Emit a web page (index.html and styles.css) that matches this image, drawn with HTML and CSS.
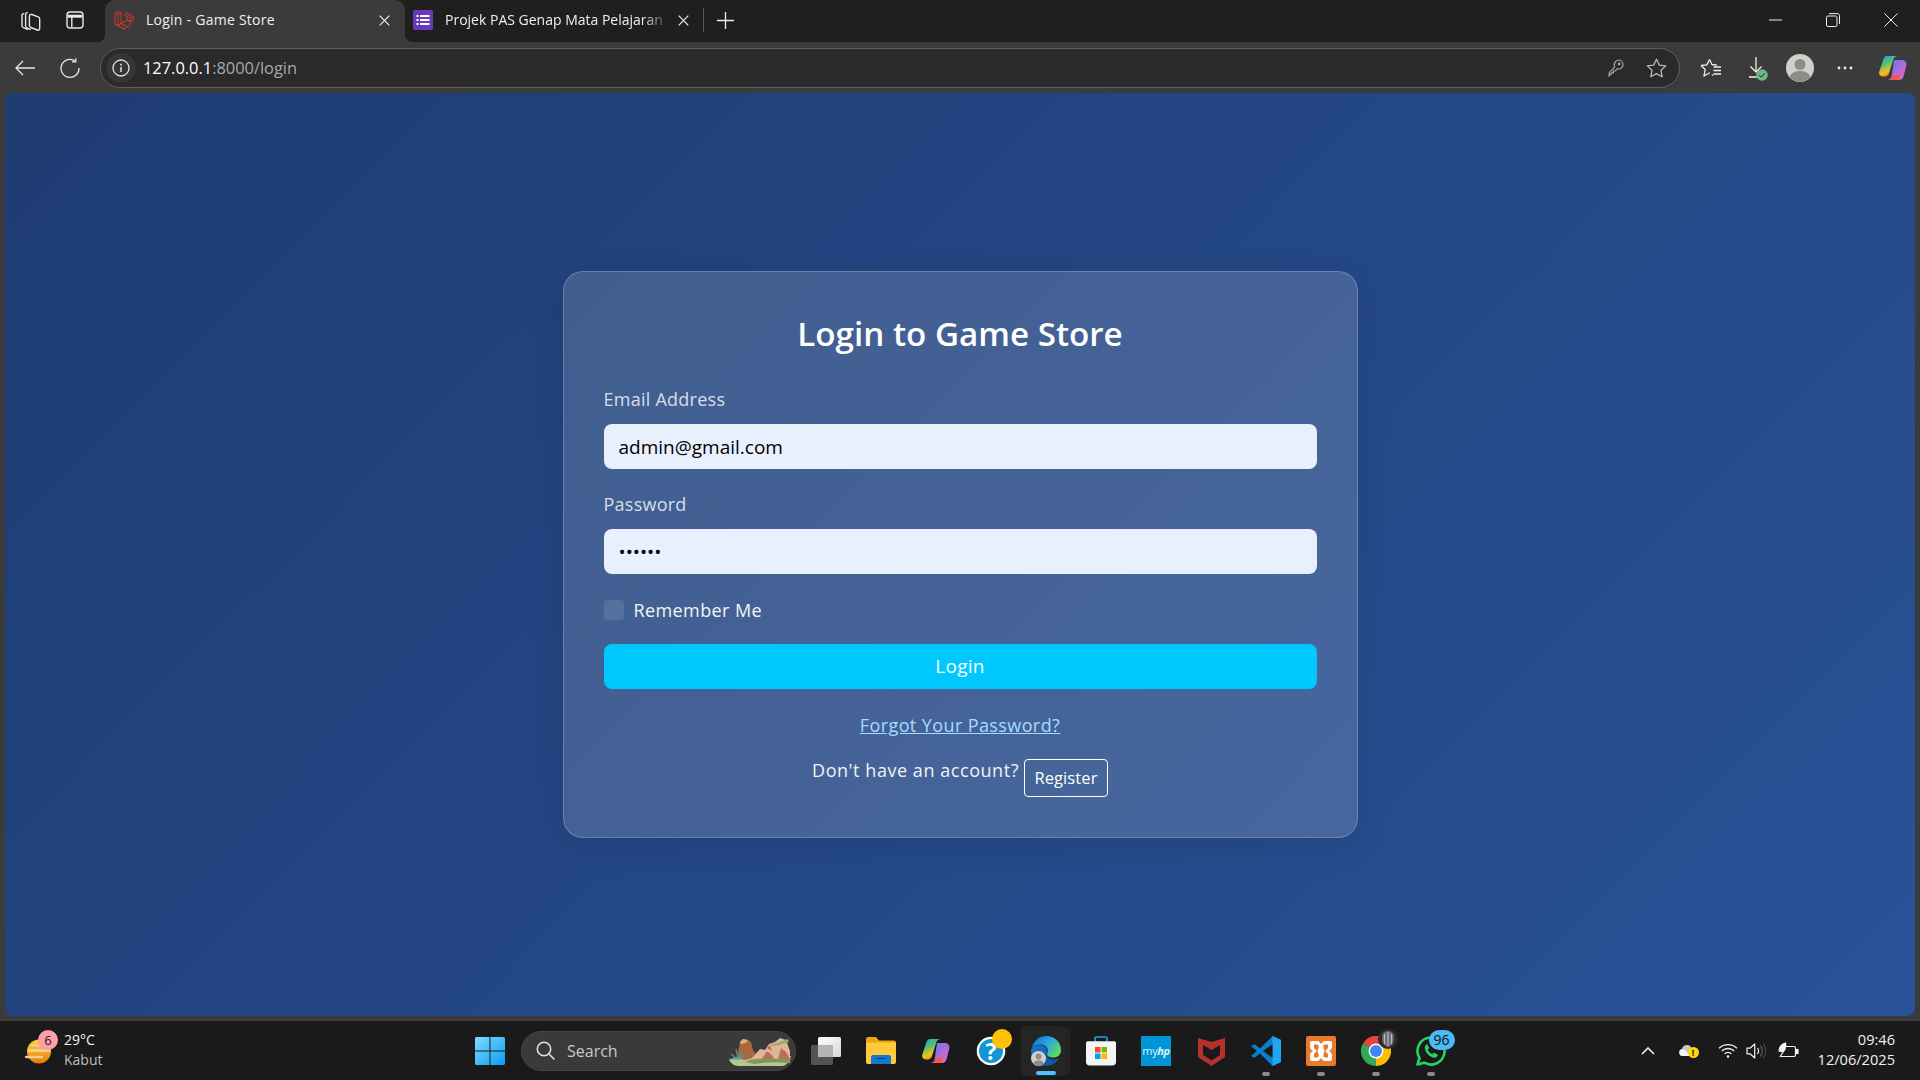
FILE: index.html
```html
<!DOCTYPE html>
<html lang="en">
<head>
<meta charset="utf-8">
<title>Login - Game Store</title>
<link rel="stylesheet" href="styles.css">
</head>
<body>
<header class="tabbar">
  <div class="tab-tools">
    <svg class="tool-a" width="22" height="22" viewBox="0 0 22 22" fill="none" stroke="#e4e4e4" stroke-width="1.4" stroke-linejoin="round"><path d="M8 20.5 3.3 18.6c-.9-.4-1.3-1-1.3-2V6.5c0-1.6 1-2.2 2.3-1.7"/><path d="M10.8 20.7 6.8 18.8c-.8-.4-1.2-1-1.2-2V5.6c0-1.5.8-2.3 2.2-1.7"/><path d="M9.4 7.3c0-1.6 1-2.3 2.4-1.8l6.4 2.4c1 .4 1.5 1.1 1.5 2.2v9.2c0 1.5-1 2.3-2.4 1.7l-6.4-2.5c-1-.4-1.5-1-1.5-2z"/></svg>
    <svg class="tool-b" width="18" height="18" viewBox="0 0 18 18" fill="none" stroke="#e8e8e8" stroke-width="1.4"><rect x="1" y="1" width="16" height="16" rx="3"/><path d="M1.6 5.2h14.8" stroke-width="3" /><path d="M5.8 6v10.5"/></svg>
  </div>
  <div class="tab tab-active">
    <svg class="tab-icon" width="21" height="20" viewBox="0 0 21 20" fill="none" stroke="#c0392b" stroke-width="1.1" stroke-linejoin="round"><path d="M1 3.2 4 1.4l3 1.8v10.3l6.2-3.6V6.4l3-1.8 3 1.8v3.6l-3 1.8v3.4l-6.2 3.6L1 14.6z"/><path d="M1 3.2l3 1.8 3-1.8M4 5v10.7l7 3.7M7 13.5l-3 2.2M13.2 6.4l3 1.8 3-1.8M16.2 8.2v3.6M13.2 9.9l3 1.9M7 13.5l6.2 3.6"/><path d="M13.2 6.4 10.2 4.6l3-1.8 3 1.8"/></svg>
    <span class="tab-title">Login - Game Store</span>
    <svg class="tab-close" width="11" height="11" viewBox="0 0 11 11" stroke="#eee" stroke-width="1.2"><path d="M.7.7l9.6 9.6M10.3.7.7 10.3"/></svg>
  </div>
  <div class="tab tab-idle">
    <svg class="tab-icon-forms" width="20" height="20" viewBox="0 0 20 20"><rect width="20" height="20" rx="1.5" fill="#673ab7"/><path d="M3.5 5h2v2h-2zM3.5 9h2v2h-2zM3.5 13h2v2h-2zM7 5h9.5v2H7zM7 9h9.5v2H7zM7 13h9.5v2H7z" fill="#fff"/></svg>
    <span class="tab-title tab-fade">Projek PAS Genap Mata Pelajaran</span>
    <svg class="tab-close" width="11" height="11" viewBox="0 0 11 11" stroke="#eee" stroke-width="1.2"><path d="M.7.7l9.6 9.6M10.3.7.7 10.3"/></svg>
  </div>
  <span class="tab-divider"></span>
  <svg class="tab-plus" width="17" height="17" viewBox="0 0 17 17" stroke="#eee" stroke-width="1.3"><path d="M8.5 0v17M0 8.5h17"/></svg>
  <div class="win-controls">
    <svg width="13" height="2" viewBox="0 0 13 2" stroke="#eee" stroke-width="1"><path d="M0 1h13"/></svg>
    <svg width="14" height="14" viewBox="0 0 14 14" fill="none" stroke="#eee" stroke-width="1"><rect x=".5" y="3" width="10.5" height="10.5" rx="1.5"/><path d="M3 .6h8.5c1.1 0 2 .9 2 2V11"/></svg>
    <svg width="14" height="14" viewBox="0 0 14 14" stroke="#eee" stroke-width="1"><path d="M.5.5l13 13M13.500.5l-13 13"/></svg>
  </div>
</header>

<nav class="toolbar">
  <svg class="nav-back" width="20" height="16" viewBox="0 0 20 16" fill="none" stroke="#e8e8e8" stroke-width="1.3"><path d="M20 8H1M8 1 1 8l7 7"/></svg>
  <svg class="nav-reload" width="20" height="20" viewBox="0 0 20 20" fill="none" stroke="#e8e8e8" stroke-width="1.3"><path d="M15.500 3.200A9 9 0 1 0 19 10"/><path d="M15.800 .2v3.600h-3.800"/></svg>
  <div class="address">
    <span class="info-chip">
      <svg width="18" height="18" viewBox="0 0 18 18" fill="none" stroke="#e0e0e0" stroke-width="1.3"><circle cx="9" cy="9" r="8"/><path d="M9 8v5" stroke-width="1.5"/><path d="M9 4.800v1.600" stroke-width="1.7"/></svg>
    </span>
    <span class="url"><span class="url-host">127.0.0.1</span>:8000/login</span>
    <svg class="addr-key" width="16" height="18" viewBox="0 0 16 18" fill="none" stroke="#a8a8a8" stroke-width="1.2"><path d="M10.500 1a4.500 4.500 0 0 1 4.500 4.500c0 3-2.800 5.200-5.700 4.300L7.200 12H5.400v1.800H3.700L2.600 15.500 1 16.800l.2-2.900 5.400-5.800C5.500 5 7.500 1 10.500 1z"/><circle cx="11.200" cy="4.800" r=".9"/></svg>
    <svg class="addr-star" width="21" height="20" viewBox="0 0 21 20" fill="none" stroke="#b8b8b8" stroke-width="1.3" stroke-linejoin="round"><path d="M10.500 1.200l2.800 5.900 6.400.8-4.700 4.400 1.200 6.400-5.700-3.100-5.700 3.100 1.200-6.400L1.300 7.900l6.400-.8z"/></svg>
  </div>
  <div class="nav-right">
    <svg class="nr-fav" width="22" height="20" viewBox="0 0 22 20" fill="none" stroke="#f0f0f0" stroke-width="1.3" stroke-linejoin="round"><path d="M9.500 1.500l2.500 5 5 .7M12 16.500l1 .9M1 7.500l5.800-.6 2.700-5.400M1 7.500l4.200 4L4 18l5.800-3.300"/><path d="M13.500 9h7.500M13.500 12.500h7.500M13.500 16h7.500"/></svg>
    <span class="nr-dl">
      <svg width="14" height="21" viewBox="0 0 14 21" fill="none" stroke="#f0f0f0" stroke-width="1.300"><path d="M7 0v15M1.500 9.500 7 15l5.500-5.500M0 20h10"/></svg>
      <svg class="dl-check" width="12" height="12" viewBox="0 0 12 12"><circle cx="6" cy="6" r="5.800" fill="#6dbb84"/><path d="M3.200 6.200l2 1.900 3.500-3.800" fill="none" stroke="#222" stroke-width="1"/></svg>
    </span>
    <svg class="nr-avatar" width="28" height="28" viewBox="0 0 28 28"><circle cx="14" cy="14" r="14" fill="#d2d0cb"/><circle cx="14" cy="10.500" r="5.500" fill="#8f8d89"/><path d="M3.500 23c2-4.500 6-6 10.500-6s8.500 1.500 10.500 6a14 14 0 0 1-21 0z" fill="#8f8d89"/></svg>
    <svg class="nr-dots" width="16" height="4" viewBox="0 0 16 4" fill="#eee"><circle cx="2" cy="2" r="1.400"/><circle cx="8" cy="2" r="1.400"/><circle cx="14" cy="2" r="1.400"/></svg>
    <svg class="nr-copilot" width="28" height="26" viewBox="0 0 28 26"><defs><linearGradient id="cpa" x1="0" y1="0" x2=".4" y2="1"><stop offset="0" stop-color="#1c9fe8"/><stop offset=".45" stop-color="#58c26c"/><stop offset=".8" stop-color="#f6c21c"/><stop offset="1" stop-color="#f28b1d"/></linearGradient><linearGradient id="cpb" x1="0" y1="0" x2="1" y2="1"><stop offset="0" stop-color="#4a7fe8"/><stop offset=".5" stop-color="#a86be0"/><stop offset="1" stop-color="#e86fb0"/></linearGradient></defs><path d="M15 5h8c3 0 5 2.500 4.300 5.500l-2.500 10c-.7 3-2.500 4.500-5 4.500H9c2-.3 3-1.500 3.600-3.500z" fill="url(#cpb)"/><path d="M8 1h11c-2.500 0-4 1.500-4.700 3.500L10 18c-.6 2-2 3.500-4 3.500H3.500C1 21.500-.5 19 .3 16.500L4.500 4C5.200 2 6.500 1 8 1z" fill="url(#cpa)"/><path d="M9 25h8c2 0 3-1 3.500-2.500l1-4c-2 1.500-5 2-8 1.500l-1 2.500c-.5 1.500-1.500 2.300-3.500 2.500z" fill="#f2574a"/></svg>
  </div>
</nav>

<main class="viewport">
  <section class="card">
    <h1 class="card-title">Login to Game Store</h1>
    <form class="login-form">
      <div class="field">
        <label class="field-label" for="email">Email Address</label>
        <input class="field-input" id="email" type="text" value="admin@gmail.com">
      </div>
      <div class="field">
        <label class="field-label" for="pass">Password</label>
        <input class="field-input" id="pass" type="password" value="secret">
      </div>
      <label class="remember"><span class="check"></span><span>Remember Me</span></label>
      <button class="login-btn" type="button">Login</button>
      <a class="forgot" href="#">Forgot Your Password?</a>
      <div class="register-row">
        <span class="register-text">Don't have an account?</span>
        <a class="register-btn" href="#">Register</a>
      </div>
    </form>
  </section>
</main>

<footer class="taskbar">
  <div class="weather">
    <span class="weather-icon">
      <svg width="26" height="30" viewBox="0 0 26 30"><defs><linearGradient id="sun" x1="0" y1="0" x2="0" y2="1"><stop offset="0" stop-color="#ffd23a"/><stop offset="1" stop-color="#ea7a0c"/></linearGradient></defs><circle cx="14" cy="15.500" r="12" fill="url(#sun)"/><path d="M4 14.500h20" stroke="#f0d08a" stroke-width="3" stroke-linecap="round"/><path d="M1 21h16M7 9.500h14" stroke="#eccd92" stroke-width="2.500" stroke-linecap="round"/></svg>
      <span class="weather-badge">6</span>
    </span>
    <div class="weather-text">
      <span class="temp">29°C</span>
      <span class="cond">Kabut</span>
    </div>
  </div>
  <div class="task-cluster">
    <span class="slot slot-win">
      <svg width="30" height="30" viewBox="0 0 30 30"><defs><linearGradient id="win" x1="0" y1="0" x2="1" y2="1"><stop offset="0" stop-color="#7fdcff"/><stop offset="1" stop-color="#0a9bf5"/></linearGradient></defs><path fill="url(#win)" d="M1 1h13.500v13.500H0V2zM15.500 1H29l1 1v12.500H15.500zM0 15.500h14.500V29H1l-1-1zM15.500 15.500H30V28l-1 1H15.500z"/></svg>
    </span>
    <div class="search">
      <svg width="19" height="19" viewBox="0 0 19 19" fill="none" stroke="#e0e0e0" stroke-width="1.600"><circle cx="8" cy="8" r="6.700"/><path d="M13 13l5 5" stroke-linecap="round"/></svg>
      <span class="search-text">Search</span>
      <svg class="search-art" width="62" height="32" viewBox="0 0 62 32"><path d="M0 25c8-5 20-3 30-3s20-2 32-1c-1 5-4 9-8 10H10C5 31 2 28 0 25z" fill="#b9c68d"/><path d="M8 22 11 7l3-3 5 1 3 2 2 8 5 7-14 3z" fill="#a8673f"/><path d="M11 7l3-3 5 1-2 3-5 1z" fill="#dcb083"/><path d="M22 24l9-10 5 1 4-6 6-2 5-4 6 2 4 11v12L42 26z" fill="#e3b496"/><path d="M33 24l5-8 5 4 3 6zM49 24l3-11 5 4 4 7zM38 13l3-3 2 6z" fill="#b9705a"/><path d="M42 9c4 1 10-3 17-5l1 3c-6 1-11 4-17 4z" fill="#93ad6b"/><path d="M16 27c10-5 24-3 46-3l-2 4c-14-1-25-1-34 1z" fill="#7f975a"/><path d="M2 19l6 5M7 14l2 10M13 16l-3 8M16 19l-5 5M0 24h10" stroke="#3ea39a" stroke-width="1.200"/></svg>
    </div>
    <span class="slot slot-first">
      <svg width="30" height="28" viewBox="0 0 30 28"><defs><linearGradient id="tv" x1="0" y1="0" x2="1" y2="1"><stop offset="0" stop-color="#fff"/><stop offset="1" stop-color="#d5d5d5"/></linearGradient></defs><rect x="7" y="0" width="23" height="20" rx="1.500" fill="url(#tv)"/><rect x="0" y="8" width="22" height="20" rx="1.500" fill="#5b5b5b" fill-opacity=".9"/><rect x="7" y="8" width="15" height="12" fill="#b4b4b4"/></svg>
    </span>
    <span class="slot">
      <svg width="30" height="27" viewBox="0 0 30 27"><path d="M0 2c0-1 1-2 2-2h8l3 3.500h15c1 0 2 .8 2 2V8H0z" fill="#e8a70c"/><path d="M0 5.500h30V25c0 1-1 2-2 2H2c-1 0-2-1-2-2z" fill="#ffcb3d"/><path d="M5 20c0-1 1-2 2-2h16c1 0 2 1 2 2v7H5z" fill="#0d79d1"/><path d="M10 21.500h10" stroke="#08406e" stroke-width="1"/></svg>
    </span>
    <span class="slot">
      <svg width="28" height="26" viewBox="0 0 28 26"><path d="M15 5h8c3 0 5 2.500 4.300 5.500l-2.500 10c-.7 3-2.500 4.500-5 4.500H9c2-.3 3-1.500 3.600-3.500z" fill="url(#cpb)"/><path d="M8 1h11c-2.500 0-4 1.500-4.700 3.500L10 18c-.6 2-2 3.500-4 3.500H3.500C1 21.500-.5 19 .3 16.500L4.500 4C5.200 2 6.500 1 8 1z" fill="url(#cpa)"/><path d="M9 25h8c2 0 3-1 3.500-2.500l1-4c-2 1.500-5 2-8 1.500l-1 2.500c-.5 1.500-1.500 2.300-3.500 2.500z" fill="#f2574a"/></svg>
    </span>
    <span class="slot">
      <svg width="30" height="30" viewBox="0 0 30 30"><circle cx="15" cy="15" r="14.300" fill="#fff"/><circle cx="15" cy="15" r="12" fill="#1296d4"/><text class="help-mark" x="15" y="24" text-anchor="middle">?</text></svg>
      <span class="help-dot"></span>
    </span>
    <span class="slot slot-active">
      <svg width="30" height="30" viewBox="0 0 30 30"><defs><linearGradient id="ed1" x1="0" y1="0" x2="1" y2=".6"><stop offset="0" stop-color="#0c6cc4"/><stop offset=".55" stop-color="#2aa6df"/><stop offset="1" stop-color="#5fd568"/></linearGradient><linearGradient id="ed2" x1="0" y1="0" x2="1" y2="1"><stop offset="0" stop-color="#1479ca"/><stop offset="1" stop-color="#0b4d9d"/></linearGradient></defs><path d="M1 12C2.500 4.500 8 0 15.500 0 24 0 30 6.500 30 14c0 5-3.500 7.500-8 7.500-3 0-6-1-6-3.500 0-1 .8-1.500 1-3 0-3.500-3-6.500-7-6.500-4 0-7.500 1.500-9 3.500z" fill="url(#ed1)"/><path d="M1 12c2-2 5-3 8.500-3 4 0 7 3 7 6.500-.5 1.500-1 2-1 3 0 3 3 5 7 5 2.500 0 5-.5 6-2-2.500 5-7.500 8.500-13.500 8.500C6.500 30 0 23 0 15c0-1 .5-2 1-3z" fill="url(#ed2)"/></svg>
      <svg class="edge-avatar" width="15" height="15" viewBox="0 0 15 15"><circle cx="7.500" cy="7.500" r="7.500" fill="#d2d0cb"/><circle cx="7.500" cy="5.500" r="3" fill="#8f8d89"/><path d="M2 12.500c1-2.500 3-3.300 5.500-3.300s4.500 .8 5.500 3.300a7.500 7.500 0 0 1-11 0z" fill="#8f8d89"/></svg>
    </span>
    <span class="slot">
      <svg width="30" height="30" viewBox="0 0 30 30"><path d="M9 6V2.500C9 1.500 9.500 1 10.500 1h9c1 0 1.500 .5 1.500 1.500V6" fill="none" stroke="#1fa5e0" stroke-width="1.600"/><path d="M0 7c0-1 .8-1.800 1.800-1.800h26.400c1 0 1.800 .8 1.800 1.800v19c0 2-1.500 3.500-3.500 3.500h-23C1.500 29.500 0 28 0 26z" fill="#f4f4f4"/><rect x="9" y="11" width="5.500" height="5.500" fill="#f25022"/><rect x="15.500" y="11" width="5.500" height="5.500" fill="#7fba00"/><rect x="9" y="17.500" width="5.500" height="5.500" fill="#00a4ef"/><rect x="15.500" y="17.500" width="5.500" height="5.500" fill="#ffb900"/></svg>
    </span>
    <span class="slot">
      <span class="myhp">my<i>hp</i></span>
    </span>
    <span class="slot">
      <svg width="27" height="30" viewBox="0 0 27 30"><path d="M0 2l13.500 4L27 2v19l-13.500 9L0 21z" fill="#b8302a"/><path d="M5 9l8.500 5L22 9v10l-8.500 5.500L5 19z" fill="#1a1a1a"/></svg>
    </span>
    <span class="slot">
      <svg width="30" height="30" viewBox="0 0 30 30"><path d="M21.500 0 30 4v22l-8.500 4L9 17.500l-5.500 4.300L0 20l6-5-6-5 3.500-1.800L9 12.500z" fill="#0a7fcb"/><path d="M21.500 0 30 4v22l-8.500 4z" fill="#22a5ee"/><path d="M21.500 8.200 12 15l9.500 6.800z" fill="#1a1a1a"/></svg>
    </span>
    <span class="slot">
      <svg width="30" height="30" viewBox="0 0 30 30"><rect width="30" height="30" rx="2" fill="#ea7a2a"/><path d="M6 5h5c2 0 3 1.500 4 3 1-1.500 2-3 4-3h5c1.500 0 2 1 2 2.500V11c0 1.500-1.500 3-3 4 1.500 1 3 2.500 3 4v3.500c0 1.500-.5 2.500-2 2.500h-5c-2 0-3-1.500-4-3-1 1.500-2 3-4 3H6c-1.500 0-2-1-2-2.500V19c0-1.500 1.500-3 3-4-1.500-1-3-2.500-3-4V7.500C4 6 4.500 5 6 5z" fill="#fff"/><path d="M8 8.500h3c1.500 0 2 1.500 1.500 3.500l-1 3 1 3c.5 2 0 3.500-1.500 3.500H8v-3.500c1-1.500 2.500-2 2.500-3s-1.500-1.500-2.500-3zM22 8.500h-3c-1.500 0-2 1.500-1.500 3.500l1 3-1 3c-.5 2 0 3.500 1.500 3.500h3v-3.500c-1-1.500-2.500-2-2.500-3s1.500-1.500 2.500-3z" fill="#ea7a2a"/></svg>
    </span>
    <span class="slot">
      <svg width="30" height="30" viewBox="0 0 30 30"><path d="M15 15 2 7.500A15 15 0 0 1 28 7.500z" fill="#e8453c"/><path d="M15 15 28 7.500A15 15 0 0 1 15 30z" fill="#fbbc05"/><path d="M15 15 15 30A15 15 0 0 1 2 7.500z" fill="#34a853"/><circle cx="15" cy="15" r="7.500" fill="#fff"/><circle cx="15" cy="15" r="6" fill="#4285f4"/></svg>
      <svg class="chrome-badge" width="20" height="20" viewBox="0 0 20 20"><circle cx="10" cy="10" r="10" fill="#2c2c2e"/><path d="M10 2c-4 0-6 3-6 7s1.500 8 6 9c4.500-1 6-5 6-9s-2-7-6-7z" fill="#6c6c70"/><path d="M10 3v14M6.500 5v10M13.500 5v10" stroke="#b8b8bc" stroke-width="1.200"/></svg>
    </span>
    <span class="slot">
      <svg width="30" height="30" viewBox="0 0 30 30" fill="none"><path d="M15 1.500A13.500 13.500 0 0 0 3.500 22L1.500 28.500 8.300 26.700A13.500 13.500 0 1 0 15 1.500z" stroke="#25d366" stroke-width="2.600" stroke-linejoin="round"/><path d="M10.500 8.500c-1.500 1-2 2.500-1.500 4.500 1 4 4.500 7.500 8 8.500 2 .5 3.500 0 4.500-1.500.5-1 .3-1.500-.3-1.800l-2.700-1.300c-.6-.3-1-.1-1.300.3l-.8 1c-2-.8-3.700-2.500-4.600-4.500l.8-.9c.4-.4.5-.8.3-1.300l-1.100-2.600c-.3-.7-1-.8-1.800-.4z" fill="#25d366"/></svg>
      <span class="wa-badge">96</span>
    </span>
  </div>
  <div class="tray">
    <svg class="tray-chev" width="14" height="8" viewBox="0 0 14 8" fill="none" stroke="#f0f0f0" stroke-width="1.600"><path d="M1 7l6-6 6 6"/></svg>
    <span class="tray-cloud">
      <svg width="16" height="11" viewBox="0 0 16 11"><path d="M3.500 11A3.500 3.500 0 0 1 3 4.100 5 5 0 0 1 12.500 3 4 4 0 0 1 12 11z" fill="#c8c8c8"/><path d="M3.500 11A3.500 3.500 0 0 1 3 4.100c2 0 4 2 5 3.500 1 1.500 2 3.400 2 3.400z" fill="#f4f4f4"/></svg>
      <span class="cloud-warn">!</span>
    </span>
    <svg class="tray-wifi" width="20" height="15" viewBox="0 0 20 15" fill="none" stroke="#f4f4f4" stroke-width="1.300"><path d="M1 5.200a13 13 0 0 1 18 0M3.800 8a9 9 0 0 1 12.400 0M6.600 10.800a5 5 0 0 1 6.800 0"/><circle cx="10" cy="13.500" r="1.200" fill="#f4f4f4" stroke="none"/></svg>
    <svg class="tray-vol" width="20" height="18" viewBox="0 0 20 18" fill="none" stroke="#f4f4f4" stroke-width="1.200"><path d="M1 6.200h3L8.700 2v14L4 11.800H1z" stroke-linejoin="round"/><path d="M11.500 6c1.300 1.800 1.300 4.200 0 6"/><path d="M14.500 3.500c2.200 3.200 2.200 7.800 0 11" stroke="#6a6a6a"/><path d="M17.300 1.500c3 4.500 3 10.500 0 15" stroke="#4a4a4a"/></svg>
    <svg class="tray-batt" width="21" height="17" viewBox="0 0 21 17" fill="none" stroke="#f4f4f4" stroke-width="1.200"><path d="M7 4.500h9c.8 0 1.500 .7 1.500 1.500v7c0 .8-.7 1.500-1.500 1.500H3"/><path d="M18 7.500h2v4h-2" fill="#f4f4f4"/><path d="M1 9.500C1 5 4 2 7.500 1c.8 3.500-.8 7.500-4 9" fill="#f4f4f4"/><path d="M1.800 15 7.500 6.500"/></svg>
    <div class="clock"><span>09:46</span><span>12/06/2025</span></div>
  </div>
</footer>
</body>
</html>
```

FILE: styles.css
```css
* { box-sizing: border-box; }
html, body { height: 100%; }
body {
  margin: 0;
  display: flex;
  flex-direction: column;
  height: 1080px;
  overflow: hidden;
  background: #3b3b3b;
  font-family: "Open Sans", "Noto Sans", sans-serif;
  color: #fff;
}
svg { display: block; flex: none; }

/* Tab strip */
.tabbar {
  height: 42px;
  flex: none;
  display: flex;
  align-items: center;
  padding-bottom: 2px;
  background: #1f1f1f;
}
.tab-tools { width: 105px; display: flex; align-items: center; padding-left: 20px; }
.tool-b { margin-left: 24px; }
.tab {
  display: flex;
  align-items: center;
  align-self: flex-start;
  height: 42px;
  position: relative;
}
.tab-active {
  width: 300px;
  padding: 0 15px 2px 9px;
  background: #3b3b3b;
  border-radius: 10px 10px 0 0;
}
.tab-active::before, .tab-active::after {
  content: "";
  position: absolute;
  bottom: 0;
  width: 8px;
  height: 8px;
}
.tab-active::before { left: -8px; background: radial-gradient(circle at 0 0, transparent 8px, #3b3b3b 8.5px); }
.tab-active::after { right: -8px; background: radial-gradient(circle at 100% 0, transparent 8px, #3b3b3b 8.5px); }
.tab-idle { width: 297px; padding: 0 13px 2px 8px; }
.tab-title {
  flex: 1;
  min-width: 0;
  margin-left: 11px;
  padding-bottom: 2px;
  font-size: 14px;
  letter-spacing: .25px;
  white-space: nowrap;
  color: #efefef;
}
.tab-icon-forms + .tab-title { margin-left: 12px; }
.tab-fade {
  margin-right: 14px;
  letter-spacing: 0;
  -webkit-mask-image: linear-gradient(90deg, #000 90%, rgba(0, 0, 0, .25));
  mask-image: linear-gradient(90deg, #000 90%, rgba(0, 0, 0, .25));
}
.tab-divider { width: 1px; height: 24px; background: #5a5a5a; margin-left: 1px; }
.tab-plus { margin-left: 13px; }
.win-controls {
  margin-left: auto;
  display: flex;
  align-items: center;
  gap: 44px;
  padding-right: 22px;
}

/* Toolbar */
.toolbar {
  height: 51px;
  flex: none;
  display: flex;
  align-items: center;
  background: #3b3b3b;
  padding: 0 13px 0 15px;
}
.nav-reload { margin-left: 25px; }
.address {
  margin-left: 20px;
  width: 1580px;
  height: 40px;
  display: flex;
  align-items: center;
  background: #2a2a2a;
  border: 1.5px solid #5f5f5f;
  border-radius: 20px;
  padding: 0 12px 0 5px;
}
.info-chip {
  width: 30px;
  height: 30px;
  border-radius: 50%;
  background: #363636;
  display: flex;
  align-items: center;
  justify-content: center;
}
.url { margin-left: 7px; font-size: 16.4px; color: #a8a8a8; }
.url-host { color: #fff; }
.addr-key { margin-left: auto; }
.addr-star { margin-left: 22px; }
.nav-right { display: flex; align-items: center; margin-left: 20px; }
.nr-dl { position: relative; margin-left: 27px; }
.dl-check { position: absolute; right: -5px; bottom: -3px; }
.nr-avatar { margin-left: 23px; }
.nr-dots { margin-left: 23px; }
.nr-copilot { margin-left: 26px; }

/* Page */
.viewport {
  flex: 1;
  min-height: 0;
  margin: 0 5px 5px;
  border-radius: 8px;
  background: linear-gradient(135deg, #1e3c72, #2a5298);
  display: flex;
  align-items: center;
  justify-content: center;
}
.card {
  width: 795px;
  height: 567px;
  padding: 40px;
  background: rgba(255, 255, 255, .15);
  border: 1px solid rgba(255, 255, 255, .2);
  border-radius: 20px;
  box-shadow: 0 8px 32px rgba(0, 0, 0, .1);
}
.card-title {
  margin: 0 0 32px;
  height: 44px;
  line-height: 44px;
  text-align: center;
  font-size: 33.2px;
  font-weight: 600;
}
.login-form { display: flex; flex-direction: column; }
.field { display: flex; flex-direction: column; gap: 14px; margin-bottom: 24px; }
.field-label {
  line-height: 22px;
  font-size: 18px;
  letter-spacing: .25px;
  color: rgba(255, 255, 255, .8);
}
.field-input {
  height: 45px;
  border: 0;
  border-radius: 8px;
  padding: 0 15px;
  background: #e8f0fe;
  color: #000;
  font: 19px "Open Sans", sans-serif;
  outline: 0;
}
.remember {
  display: flex;
  align-items: center;
  gap: 10px;
  height: 24px;
  font-size: 18px;
  letter-spacing: .4px;
  margin-bottom: 22px;
  color: #f4f4f4;
}
.check {
  width: 20px;
  height: 20px;
  border-radius: 4px;
  background: rgba(255, 255, 255, .1);
}
.login-btn {
  height: 45px;
  border: 0;
  border-radius: 8px;
  padding: 0 0 1px;
  background: #00c8ff;
  color: #fff;
  font: 19px "Open Sans", sans-serif;
  letter-spacing: .3px;
}
.forgot {
  margin-top: 24px;
  align-self: center;
  line-height: 24px;
  font-size: 18px;
  letter-spacing: .4px;
  color: #a8dcff;
}
.register-row {
  display: flex;
  justify-content: center;
  align-items: flex-start;
  gap: 5px;
  margin-top: 22px;
}
.register-text { line-height: 23px; font-size: 18px; letter-spacing: .55px; color: #f2f2f2; }
.register-btn {
  height: 38px;
  width: 84px;
  line-height: 36px;
  text-align: center;
  border: 1px solid #fff;
  border-radius: 4px;
  color: #fff;
  font-size: 16.5px;
  letter-spacing: .1px;
  text-decoration: none;
}

/* Taskbar */
.taskbar {
  height: 59px;
  flex: none;
  display: flex;
  align-items: center;
  background: #1a1a1a;
}
.weather { width: 462px; display: flex; align-items: center; padding-left: 25px; }
.weather-icon { position: relative; display: block; }
.weather-badge {
  position: absolute;
  left: 13px;
  top: -6px;
  width: 20px;
  height: 20px;
  border-radius: 50%;
  background: #ff9ea8;
  color: #1a1a1a;
  font-size: 13px;
  line-height: 20px;
  text-align: center;
}
.weather-text {
  margin-left: 13px;
  padding-bottom: 1px;
  display: flex;
  flex-direction: column;
  font-size: 14px;
  line-height: 20px;
}
.temp { color: #f4f4f4; }
.cond { color: #bdbdbd; }
.task-cluster { display: flex; align-items: center; }
.slot {
  position: relative;
  width: 55px;
  height: 50px;
  display: flex;
  align-items: center;
  justify-content: center;
}
.slot-win { margin-right: 4px; }
.slot-first { margin-left: 2.5px; }
.search {
  width: 275px;
  height: 40px;
  border-radius: 20px;
  background: #3a3a3a;
  border: 1px solid #454545;
  display: flex;
  align-items: center;
  padding: 0 4px 0 14px;
}
.search-text { margin-left: 12px; color: #c8c8c8; font-size: 16px; }
.search-art { margin-left: auto; }
.help-mark { font: 700 23px "Open Sans", sans-serif; fill: #fff; }
.help-dot {
  position: absolute;
  left: 28.5px;
  top: 3px;
  width: 20px;
  height: 20px;
  border-radius: 50%;
  background: #ffc107;
}
.slot-active {
  background: #252525;
  border-radius: 5px;
  box-shadow: 5px 0 0 -1px #232323;
  width: 45px;
  margin: 0 7.5px 0 2.5px;
  padding-left: 5px;
}
.slot-active::after {
  content: "";
  position: absolute;
  left: 15px;
  bottom: 1px;
  width: 20px;
  height: 4px;
  border-radius: 2px;
  background: #4cc2ff;
}
.edge-avatar { position: absolute; left: 9.5px; top: 25px; }
.myhp {
  width: 30px;
  height: 30px;
  background: #0096d6;
  color: #dff3fb;
  font-size: 11px;
  line-height: 30px;
  text-align: center;
  letter-spacing: -.4px;
}
.myhp i { font-weight: 700; }
.slot:nth-last-child(-n+4)::after {
  content: "";
  position: absolute;
  left: 23.5px;
  bottom: 0;
  width: 8px;
  height: 4px;
  border-radius: 2px;
  background: #8a8a8a;
}
.chrome-badge { position: absolute; left: 29px; top: 3px; }
.wa-badge {
  position: absolute;
  left: 25px;
  top: 4px;
  width: 26px;
  height: 20px;
  border-radius: 10px;
  background: #4cb8f5;
  color: #111;
  font-size: 14px;
  line-height: 20px;
  text-align: center;
}
.tray { flex: 1; display: flex; align-items: center; padding-left: 182px; }
.tray-cloud { position: relative; margin-left: 24px; }
.cloud-warn {
  position: absolute;
  left: 9px;
  top: 2px;
  width: 11px;
  height: 11px;
  border-radius: 50%;
  background: #ffd60a;
  color: #111;
  font: 700 9px/11px "Open Sans", sans-serif;
  text-align: center;
}
.tray-wifi { margin-left: 23.5px; }
.tray-vol { margin-left: 8px; }
.tray-batt { margin-left: 11.5px; }
.clock {
  margin-left: 9.5px;
  width: 87px;
  padding-bottom: 4px;
  display: flex;
  flex-direction: column;
  align-items: flex-end;
  font-size: 14.6px;
  line-height: 20px;
  color: #f0f0f0;
}
```
